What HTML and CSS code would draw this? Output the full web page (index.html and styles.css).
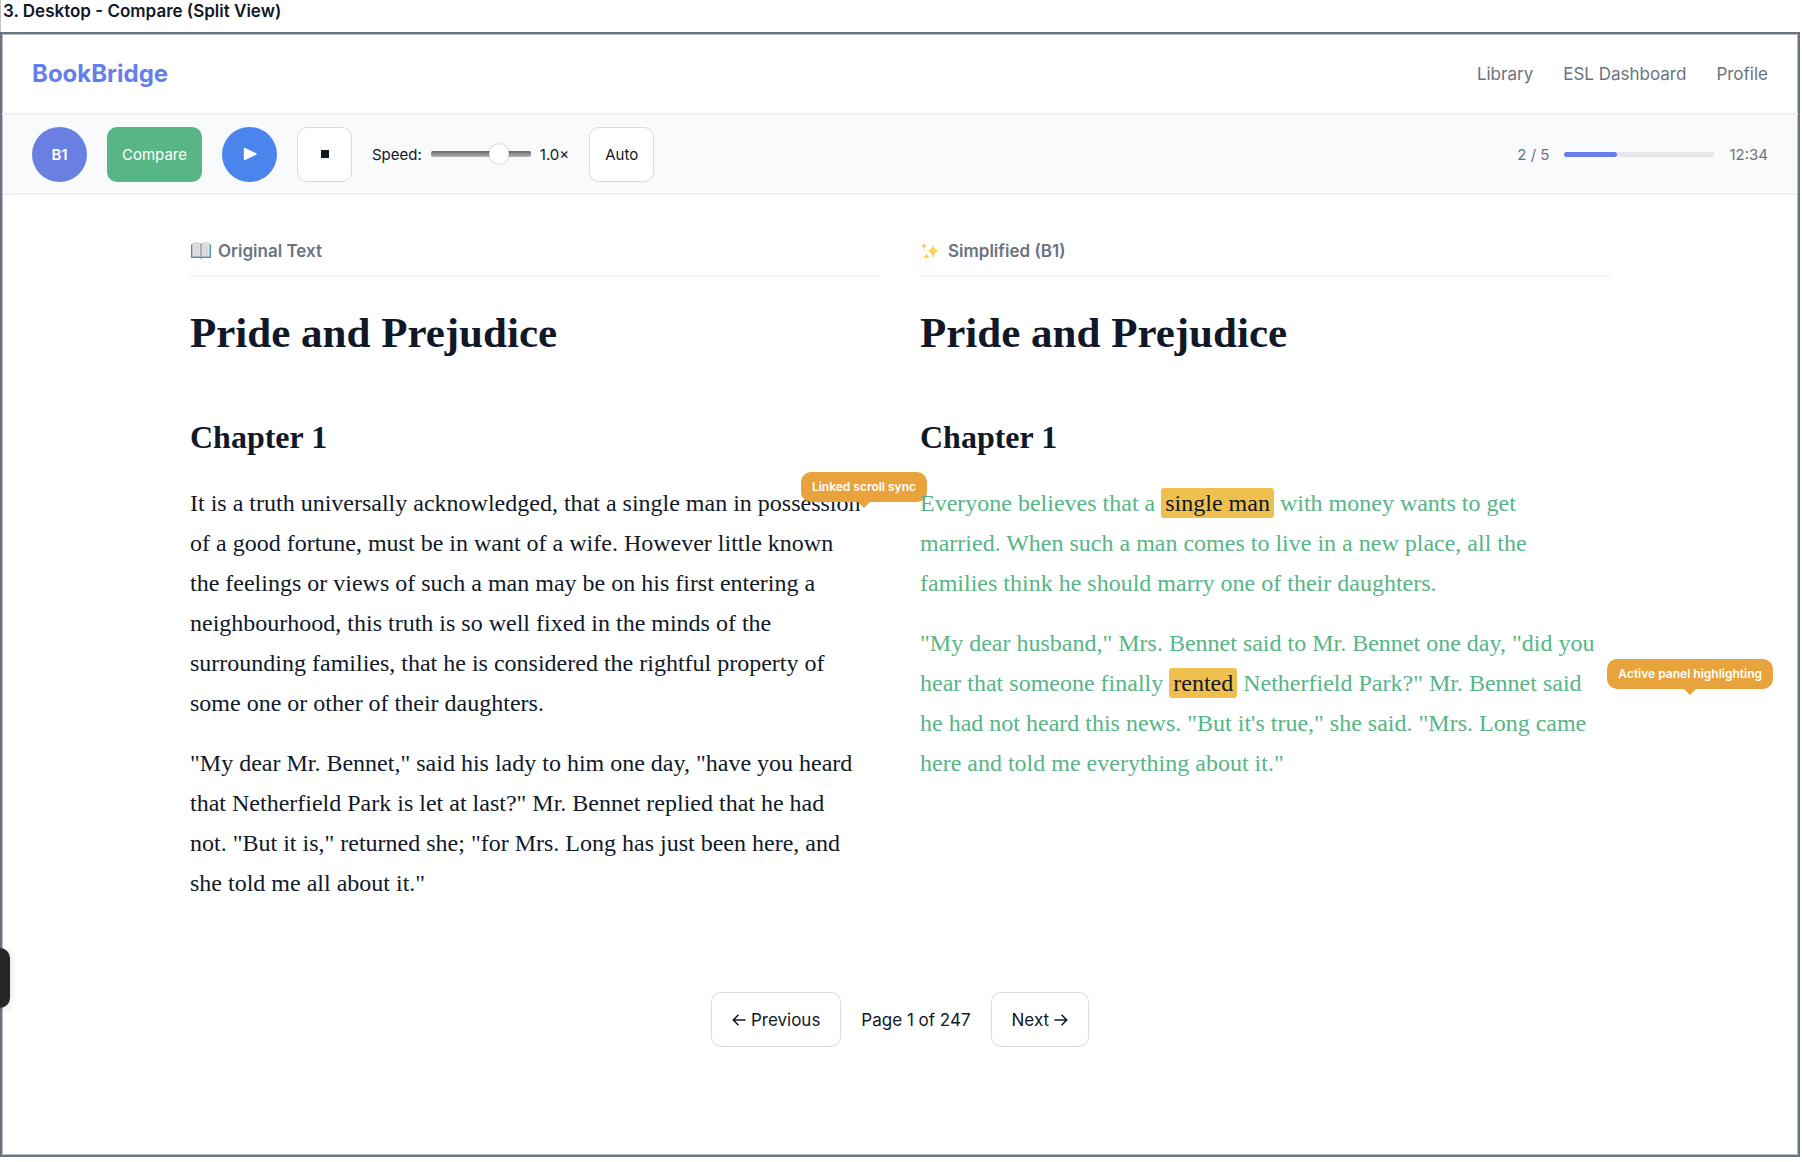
FILE: index.html
```html
<!DOCTYPE html>
<html lang="en">
<head>
<meta charset="utf-8">
<title>BookBridge - Compare</title>
<link rel="stylesheet" href="styles.css">
</head>
<body>
<h2 class="caption">3. Desktop - Compare (Split View)</h2>
<div class="frame">
  <header class="header">
    <a class="logo" href="#">BookBridge</a>
    <nav class="nav">
      <a href="#">Library</a>
      <a href="#">ESL Dashboard</a>
      <a href="#">Profile</a>
    </nav>
  </header>
  <div class="toolbar">
    <button class="btn level" type="button">B1</button>
    <button class="btn compare" type="button">Compare</button>
    <button class="btn play" type="button" aria-label="Play">
      <svg width="14" height="14" viewBox="0 0 14 14"><path d="M1.5 1.4v11.2L13 7z" fill="#fff" stroke="#fff" stroke-width="1.4" stroke-linejoin="round"/></svg>
    </button>
    <button class="btn stop" type="button" aria-label="Stop">
      <svg width="8" height="8" viewBox="0 0 8 8"><rect width="8" height="8" fill="#111827"/></svg>
    </button>
    <div class="speed">
      <label for="speed">Speed:</label>
      <input id="speed" type="range" min="0.5" max="1.25" step="0.05" value="1.05">
      <span>1.0×</span>
    </div>
    <button class="btn auto" type="button">Auto</button>
    <div class="progress">
      <span>2 / 5</span>
      <div class="track"><div class="fill" style="width: 35%"></div></div>
      <span>12:34</span>
    </div>
  </div>
  <main class="content">
    <div class="panels">
      <section class="panel">
        <h3 class="panel-title">
          <svg width="22" height="18" viewBox="0 0 22 18">
            <path d="M1 2.5h1.500v12h7.500l1 1 1-1h7.500v-12H21V16h-8.500q-1.500 1.500-3 0H1z" fill="#4f8fb5"/>
            <path d="M2.500 1.500Q8-.2 11 1.800q3-2 8.500-.3v12.800q-5.500-1.200-8.500.7-3-1.900-8.500-.7z" fill="#e9e9ec" stroke="#a7a9ae" stroke-width=".6"/>
            <path d="M11 2v12.800" stroke="#74767b" stroke-width="1"/>
            <path d="M4 4q3-1 5.500 0M4 6q3-1 5.500 0M4 8q3-1 5.500 0M4 10q3-1 5.500 0M4 12q3-1 5.500 0M12.500 4q3-1 5.500 0M12.500 6q3-1 5.500 0M12.500 8q3-1 5.500 0M12.500 10q3-1 5.500 0M12.500 12q3-1 5.500 0" fill="none" stroke="#b9babf" stroke-width=".7"/>
          </svg>
          Original Text
        </h3>
        <h1 class="book-title">Pride and Prejudice</h1>
        <h2 class="chapter">Chapter 1</h2>
        <div class="prose">
          <p>It is a truth universally acknowledged, that a single man in possession of a good fortune, must be in want of a wife. However little known the feelings or views of such a man may be on his first entering a neighbourhood, this truth is so well fixed in the minds of the surrounding families, that he is considered the rightful property of some one or other of their daughters.</p>
          <p>"My dear Mr. Bennet," said his lady to him one day, "have you heard that Netherfield Park is let at last?" Mr. Bennet replied that he had not. "But it is," returned she; "for Mrs. Long has just been here, and she told me all about it."</p>
        </div>
        <div class="note note-sync">Linked scroll sync</div>
      </section>
      <section class="panel">
        <h3 class="panel-title">
          <svg width="22" height="18" viewBox="0 0 22 18">
            <path d="M13 1.500q.7 6.800 6.500 7.500-5.800.7-6.500 7.500Q12.300 9.700 6.500 9 12.300 8.300 13 1.500z" fill="#f9d54f"/>
            <path d="M4 0q.3 3.600 3 4-2.700.4-3 4-.3-3.600-3-4 2.700-.4 3-4zM6.500 11q.3 3 3 3.500-2.700.5-3 3.500-.3-3-3-3.500 2.700-.5 3-3.500z" fill="#f5cf6a"/>
          </svg>
          Simplified (B1)
        </h3>
        <h1 class="book-title">Pride and Prejudice</h1>
        <h2 class="chapter">Chapter 1</h2>
        <div class="prose simplified">
          <p>Everyone believes that a <mark>single man</mark> with money wants to get married. When such a man comes to live in a new place, all the families think he should marry one of their daughters.</p>
          <p>"My dear husband," Mrs. Bennet said to Mr. Bennet one day, "did you hear that someone finally <mark>rented</mark> Netherfield Park?" Mr. Bennet said he had not heard this news. "But it's true," she said. "Mrs. Long came here and told me everything about it."</p>
        </div>
        <div class="note note-active">Active panel highlighting</div>
      </section>
    </div>
    <nav class="pager">
      <button class="btn page-btn" type="button"><svg width="14" height="12" viewBox="0 0 14 12"><path d="M13 6H1.500M6 1.200L1.200 6 6 10.800"/></svg>Previous</button>
      <span>Page 1 of 247</span>
      <button class="btn page-btn" type="button">Next<svg width="14" height="12" viewBox="0 0 14 12"><path d="M1 6h11.500M8 1.200L12.800 6 8 10.800"/></svg></button>
    </nav>
  </main>
</div>
<div class="side-tab"></div>
</body>
</html>
```
FILE: styles.css
```css
* { box-sizing: border-box; }

body {
  margin: 0;
  min-height: 100vh;
  display: flex;
  flex-direction: column;
  padding: 0 2px 5px 0;
  background: #fff;
  color: #111827;
  font-family: Inter, "Liberation Sans", sans-serif;
  font-size: 15px;
}

h1, h2, h3, p { margin: 0; }
a { text-decoration: none; color: inherit; }

.caption {
  padding: 0 2px;
  height: 32px;
  border-left: 1px solid #c4c4c4;
  font-size: 17px;
  line-height: 22px;
  font-weight: 600;
}

.frame {
  flex: 1;
  border: 2px solid #6b7280;
  box-shadow: inset 0 0 0 1px #b9bbc4;
}

.header {
  display: flex;
  align-items: center;
  justify-content: space-between;
  height: 81px;
  padding: 0 30px;
  border-bottom: 2px solid #f0f1f4;
}

.logo { font-size: 24px; font-weight: 700; color: #667eea; }
.nav { display: flex; gap: 30px; font-size: 17px; color: #6b7280; }

.toolbar {
  display: flex;
  align-items: center;
  gap: 20px;
  height: 80px;
  margin: 0 1px;
  padding: 0 29px;
  background: #f9fafb;
  border-bottom: 2px solid #f0f1f4;
}

.btn {
  display: flex;
  align-items: center;
  justify-content: center;
  height: 55px;
  padding: 0 15px;
  border: 1px solid #d8dade;
  border-radius: 10px;
  background: #fff;
  color: inherit;
  font: inherit;
}
.level, .play { width: 55px; padding: 0; border: 0; border-radius: 50%; color: #fff; }
.level { background: #697fe2; font-weight: 600; }
.compare { border: 0; background: #57b586; color: #fff; }
.play { background: #4c84ee; }
.stop { width: 55px; padding: 0; }

.speed { display: flex; align-items: center; gap: 9px; }
.speed input {
  appearance: none;
  width: 100px;
  height: 20px;
  margin: 0;
  background: transparent;
}
.speed input::-webkit-slider-runnable-track {
  height: 6px;
  border-radius: 2px;
  background: linear-gradient(#666, #b4b4b4);
}
.speed input::-webkit-slider-thumb {
  appearance: none;
  width: 20px;
  height: 20px;
  margin-top: -7px;
  border-radius: 50%;
  background: #fff;
  box-shadow: 0 0 2px rgba(0, 0, 0, .35);
}

.progress {
  display: flex;
  align-items: center;
  gap: 15px;
  margin-left: auto;
  color: #6b7280;
}
.track { width: 150px; height: 5px; border-radius: 3px; background: #e5e7eb; }
.fill { height: 100%; border-radius: 3px; background: #667eea; }

.content {
  max-width: 1500px;
  margin: 0 auto;
  padding: 40px;
}
.panels { display: grid; grid-template-columns: 1fr 1fr; gap: 40px; }
.panel { position: relative; }

.panel-title {
  display: flex;
  align-items: center;
  gap: 6px;
  height: 42px;
  padding-bottom: 9px;
  border-bottom: 2px solid #f3f4f6;
  font-size: 17px;
  font-weight: 600;
  color: #6b7280;
}

.book-title, .chapter, .prose {
  font-family: Charter, "Liberation Serif", serif;
}
.book-title { margin-top: 28px; font-size: 43px; line-height: 56px; }
.chapter { margin-top: 56px; font-size: 32px; line-height: 40px; }
.prose { margin-top: 26px; padding-right: 14px; font-size: 24px; line-height: 40px; }
.prose p + p { margin-top: 20px; }
.simplified { color: #57b586; }

mark {
  padding: 2px 4px;
  border-radius: 3px;
  background: #f0c04f;
  color: #111827;
}

.note {
  position: absolute;
  padding: 0 11px;
  border-radius: 10px;
  background: #e8a33d;
  color: #fff;
  font-size: 12px;
  font-weight: 600;
  line-height: 30px;
  white-space: nowrap;
}
.note::after {
  content: "";
  position: absolute;
  top: 100%;
  left: 50%;
  margin-left: -6px;
  border: 6px solid transparent;
  border-top-color: #e8a33d;
  border-bottom: 0;
}
.note-sync { top: 237px; right: -47px; }
.note-active { top: 424px; right: -163px; }

.pager {
  display: flex;
  align-items: center;
  justify-content: center;
  gap: 20px;
  margin-top: 89px;
  font-size: 17px;
}
.page-btn { padding: 0 20px; gap: 5px; }
.page-btn svg { fill: none; stroke: #111827; stroke-width: 1.6; stroke-linecap: round; stroke-linejoin: round; }

.side-tab {
  position: fixed;
  left: 0;
  top: 948px;
  width: 10px;
  height: 60px;
  border-radius: 0 10px 10px 0;
  background: #262626;
  box-shadow: 0 2px 8px rgba(0, 0, 0, .15);
}
```
